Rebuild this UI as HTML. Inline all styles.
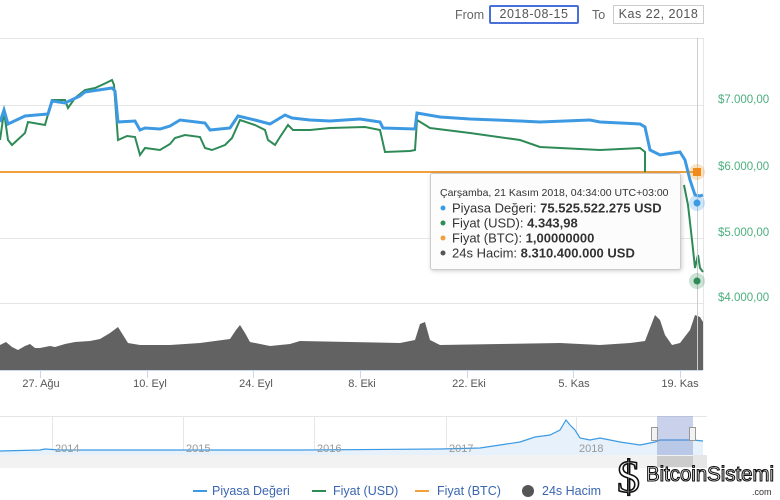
<!DOCTYPE html>
<html><head><meta charset="utf-8"><style>
body{margin:0;width:780px;height:500px;background:#fff;overflow:hidden;font-family:"Liberation Sans",sans-serif;position:relative}
.t{position:absolute;font-size:12px;color:#666}
.box{position:absolute;height:17px;border:1px solid #ccc;font-size:12.5px;color:#555;text-align:center;line-height:17px;letter-spacing:.5px}
</style></head><body>
<div class="t" style="left:455px;top:8px;font-size:12.5px">From</div>
<div class="box" style="left:489px;top:5px;width:86px;border:2px solid #4a6fd8;height:15px;line-height:15px;border-radius:2px">2018-08-15</div>
<div class="t" style="left:592px;top:8px;font-size:12.5px">To</div>
<div class="box" style="left:613px;top:5px;width:89px">Kas 22, 2018</div>
<svg width="780" height="500" style="position:absolute;left:0;top:0" font-family="Liberation Sans, sans-serif">
<g stroke="#e6e6e6" stroke-width="1">
<line x1="0" y1="38.5" x2="704" y2="38.5"/>
<line x1="0" y1="105.5" x2="704" y2="105.5"/>
<line x1="0" y1="238.5" x2="704" y2="238.5"/>
<line x1="0" y1="303.5" x2="704" y2="303.5"/>
</g>
<line x1="703.5" y1="38" x2="703.5" y2="370" stroke="#e6e6e6"/>
<g fill="#4caf7d" font-size="11.5">
<text x="718" y="103">$7.000,00</text><text x="718" y="170">$6.000,00</text>
<text x="718" y="236">$5.000,00</text><text x="718" y="301">$4.000,00</text>
</g>
<path d="M0,370 L0,345 6,342 12,347 18,350 25,346 30,344 35,348 40,348 50,346 55,347 65,344 75,342 90,341 100,339 110,333 118,327 123,335 128,343 140,345 170,345 200,343 230,339 236,330 240,325 245,333 250,342 270,346 290,344 300,341 350,342 400,343 415,340 420,324 425,322 430,340 440,345 500,344 560,343 600,345 630,343 645,341 650,328 655,315 660,320 665,335 672,345 680,343 690,330 695,315 700,317 703,322 703,370 Z" fill="#626262"/>
<line x1="0" y1="370.5" x2="703" y2="370.5" stroke="#ccd6eb"/>
<g stroke="#ccd6eb"><line x1="40.5" y1="370" x2="40.5" y2="378"/><line x1="147.5" y1="370" x2="147.5" y2="378"/><line x1="253.5" y1="370" x2="253.5" y2="378"/><line x1="360.5" y1="370" x2="360.5" y2="378"/><line x1="467.5" y1="370" x2="467.5" y2="378"/><line x1="573.5" y1="370" x2="573.5" y2="378"/><line x1="680.5" y1="370" x2="680.5" y2="378"/></g>
<g fill="#555" font-size="11" text-anchor="middle">
<text x="41" y="387">27. Ağu</text><text x="150" y="387">10. Eyl</text><text x="256" y="387">24. Eyl</text><text x="362" y="387">8. Eki</text><text x="469" y="387">22. Eki</text><text x="574" y="387">5. Kas</text><text x="680" y="387">19. Kas</text>
</g>
<line x1="0" y1="172" x2="697" y2="172" stroke="#f0a03c" stroke-width="2"/>
<polyline fill="none" stroke="#2e8b57" stroke-width="2" points="0,140 4,112 8,140 12,145 25,133 28,122 45,125 52,100 65,100 68,108 75,98 85,90 95,88 106,83 112,80 114,85 118,140 127,136 135,137 140,155 145,148 160,150 170,144 175,138 185,135 200,137 205,148 212,150 225,145 232,138 240,120 255,125 265,130 268,140 275,145 280,137 288,125 293,130 310,130 330,128 365,127 380,130 385,152 410,151 415,150 417,120 430,128 470,133 520,140 540,147 600,150 640,148 645,152 645,172"/>
<polyline fill="none" stroke="#2e8b57" stroke-width="2" points="684,185 688,205 692,240 695,268 698,255 700,268 703,272"/>
<polyline fill="none" stroke="#3d9ae2" stroke-width="3" points="0,122 4,110 8,124 25,116 48,114 52,101 65,103 80,96 85,92 112,88 115,91 118,122 135,121 140,130 145,128 160,129 170,126 180,120 205,123 210,130 230,128 238,116 255,120 270,124 285,115 292,118 310,120 330,121 360,119 380,122 383,128 415,129 417,113 440,117 470,119 520,121 540,122 590,120 600,122 640,124 645,127 650,150 660,155 680,152 685,160 690,180 695,195 700,196 703,195"/>
<line x1="697.5" y1="38" x2="697.5" y2="370" stroke="#ccc"/>
<circle cx="697" cy="172" r="8" fill="#f0a03c" opacity=".3"/><rect x="693" y="168" width="8" height="8" fill="#f08a1c"/>
<circle cx="697" cy="203" r="8" fill="#3d9ae2" opacity=".25"/><circle cx="697" cy="203" r="3.5" fill="#3d9ae2"/>
<circle cx="697" cy="281" r="8" fill="#2e8b57" opacity=".25"/><circle cx="697" cy="281" r="3.5" fill="#2e8b57"/>
<rect x="430.5" y="173.5" width="250" height="96" fill="#fff" fill-opacity=".93" stroke="#ccc" rx="2" style="filter:drop-shadow(1px 1px 2px rgba(0,0,0,.2))"/>
<g font-size="13" fill="#333">
<text x="440" y="196" font-size="10.5">Çarşamba, 21 Kasım 2018, 04:34:00 UTC+03:00</text>
<circle cx="443" cy="208" r="2.5" fill="#3d9ae2"/><text x="452" y="212.5">Piyasa Değeri: <tspan font-weight="bold">75.525.522.275 USD</tspan></text>
<circle cx="443" cy="223" r="2.5" fill="#2e8b57"/><text x="452" y="227.5">Fiyat (USD): <tspan font-weight="bold">4.343,98</tspan></text>
<circle cx="443" cy="238" r="2.5" fill="#f0a03c"/><text x="452" y="242.5">Fiyat (BTC): <tspan font-weight="bold">1,00000000</tspan></text>
<circle cx="443" cy="253" r="2.5" fill="#555"/><text x="452" y="257.5">24s Hacim: <tspan font-weight="bold">8.310.400.000 USD</tspan></text>
</g>
<line x1="0" y1="416.5" x2="707" y2="416.5" stroke="#e6e6e6"/>
<g stroke="#e6e6e6"><line x1="52.5" y1="416" x2="52.5" y2="455"/><line x1="183.5" y1="416" x2="183.5" y2="455"/><line x1="314.5" y1="416" x2="314.5" y2="455"/><line x1="446.5" y1="416" x2="446.5" y2="455"/><line x1="576.5" y1="416" x2="576.5" y2="455"/></g>
<path d="M0,451 L40,450 45,449 60,450 300,450 440,449 480,448 500,445 520,442 535,437 550,435 560,430 566,420 570,425 575,430 580,438 590,440 600,438 620,442 640,445 655,442 660,440 693,440 703,441 703,455 0,455Z" fill="#e6f1fb"/>
<polyline fill="none" stroke="#3d9ae2" stroke-width="1.2" points="0,451 40,450 45,449 60,450 300,450 440,449 480,448 500,445 520,442 535,437 550,435 560,430 566,420 570,425 575,430 580,438 590,440 600,438 620,442 640,445 655,442 660,440 693,440 703,441"/>
<g fill="#999" font-size="11"><text x="55" y="452">2014</text><text x="186" y="452">2015</text><text x="317" y="452">2016</text><text x="449" y="452">2017</text><text x="579" y="452">2018</text></g>
<rect x="657" y="416" width="36" height="39" fill="#667bc6" opacity=".35"/>
<rect x="651.5" y="427.5" width="6" height="13" fill="#f2f2f2" stroke="#999"/><rect x="689.5" y="427.5" width="6" height="13" fill="#f2f2f2" stroke="#999"/>
<rect x="0" y="455" width="707" height="13" fill="#f2f2f2"/>
<rect x="657" y="456" width="36" height="11" fill="#ccc"/>
<rect x="693" y="455" width="14" height="13" fill="#e6e6e6"/>
<g font-size="12.5" fill="#3a66b0">
<line x1="193" y1="491" x2="207" y2="491" stroke="#3d9ae2" stroke-width="2"/><text x="212" y="495">Piyasa Değeri</text>
<line x1="312" y1="491" x2="326" y2="491" stroke="#2e8b57" stroke-width="2"/><text x="333" y="495">Fiyat (USD)</text>
<line x1="415" y1="491" x2="429" y2="491" stroke="#f0a03c" stroke-width="2"/><text x="437" y="495">Fiyat (BTC)</text>
<circle cx="528" cy="491" r="6" fill="#555"/><text x="542" y="495">24s Hacim</text>
</g>
<text x="617" y="492" font-size="46" font-family="Liberation Serif, serif" fill="#fff" stroke="#111" stroke-width="1.6">$</text>
<text x="646" y="481" font-size="21" font-family="Liberation Sans, sans-serif" fill="#fff" stroke="#111" stroke-width="1.1" textLength="128" lengthAdjust="spacingAndGlyphs">BitcoinSistemi</text>
<text x="752" y="495" font-size="9" fill="#333">.com</text>
</svg>
</body></html>
